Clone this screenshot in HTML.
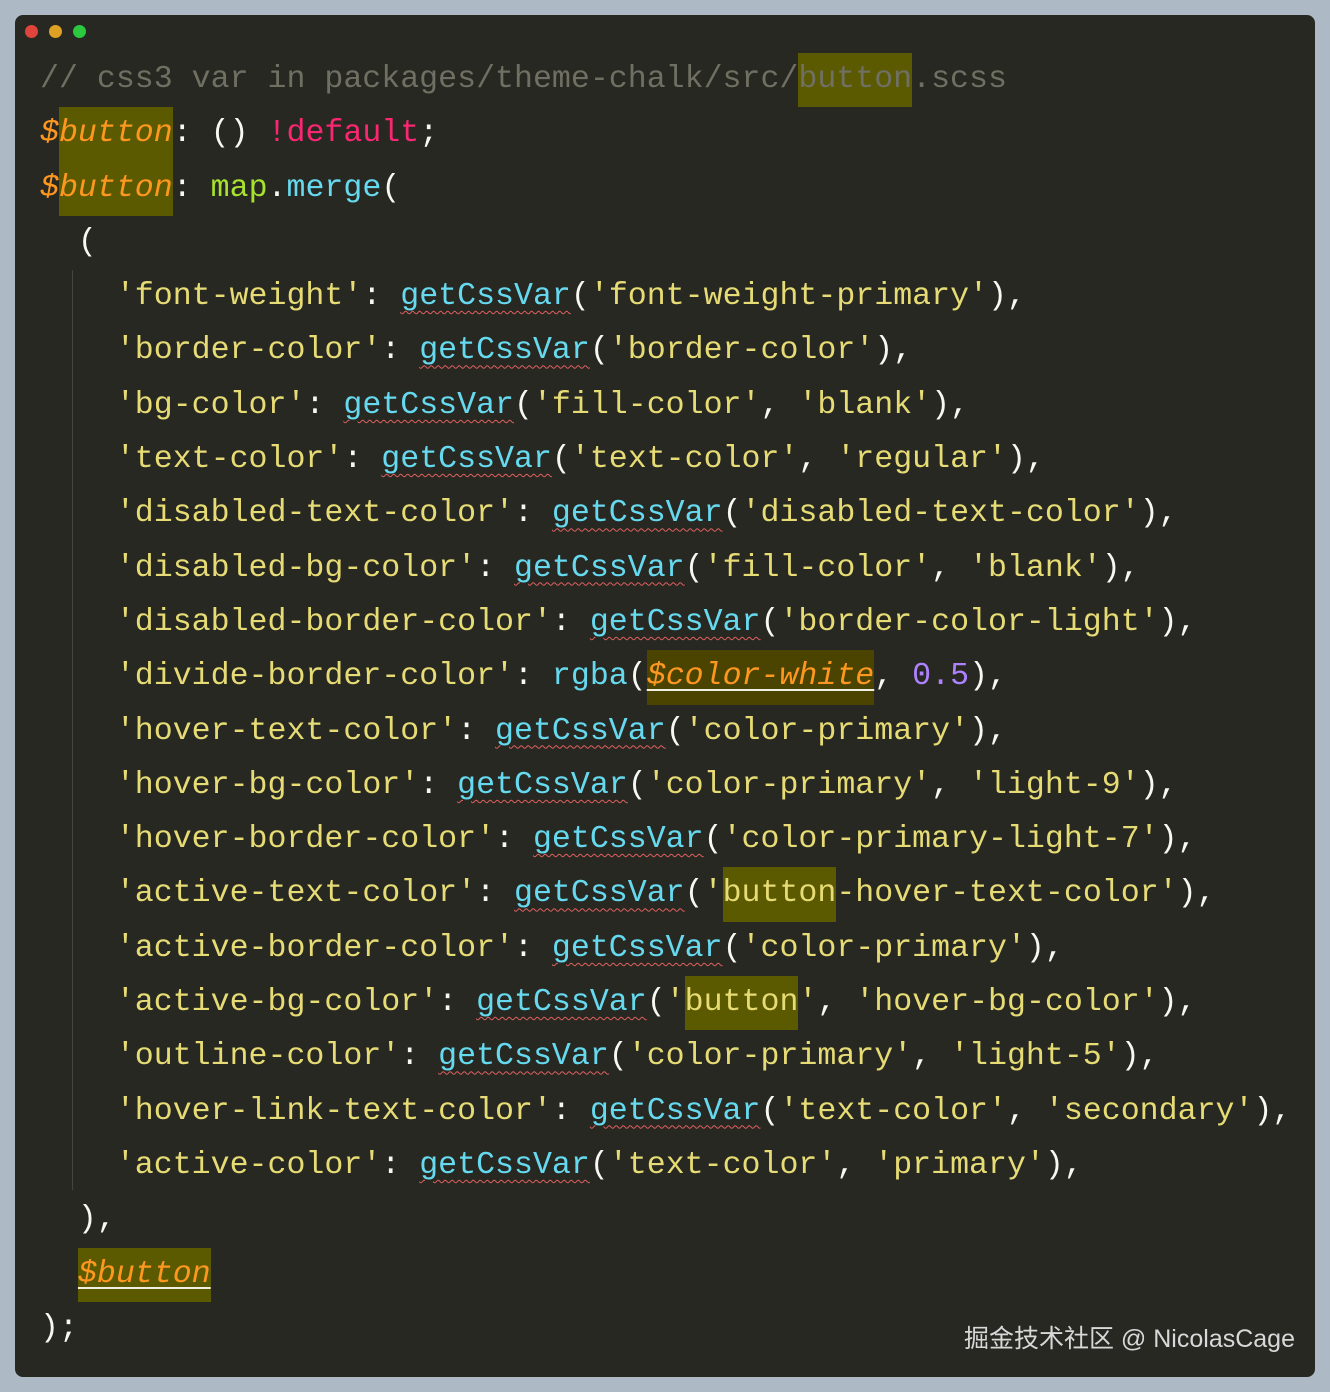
<!DOCTYPE html>
<html><head><meta charset="utf-8"><style>
html,body{margin:0;padding:0;width:1330px;height:1392px;background:#adb9c4;overflow:hidden}
.win{position:absolute;left:15px;top:15px;width:1300px;height:1362px;background:#272822;border-radius:8px}
.dot{position:absolute;top:10px;width:13px;height:13px;border-radius:50%}
pre{position:absolute;left:40px;top:53px;margin:0;font-family:"Liberation Mono",monospace;font-size:31.6px;line-height:54.3px;color:#f8f8f2;white-space:pre}
.c{color:#6f6f62}.o{color:#fd971f;font-style:italic}.p{color:#f92672}.g{color:#a6e22e}.b{color:#66d9ef}.y{color:#e6db74}.n{color:#ae81ff}
.w{text-decoration:underline wavy #e06060;text-decoration-thickness:1px;text-underline-offset:6px}
.h{background:#5b5a00;display:inline-block;line-height:54.3px}
.h2{background:#4a4400;text-decoration:underline #f0f0e0 2px;text-underline-offset:5px}
.guide{position:absolute;left:72px;top:270px;width:1px;height:920px;background:#444}
.wm{position:absolute;right:20px;bottom:22px;font-family:"Liberation Sans","Noto Sans CJK SC",sans-serif;font-size:25px;color:#d8d8d8}
</style></head><body>
<div class="win">
<div class="dot" style="left:10px;background:#e0443a"></div>
<div class="dot" style="left:34px;background:#dea123"></div>
<div class="dot" style="left:58px;background:#2bc840"></div>
<div class="wm">掘金技术社区 @ NicolasCage</div>
</div>
<div class="guide"></div>
<pre><span class="c">// css3 var in packages/theme-chalk/src/<span class="h">button</span>.scss</span>
<span class="o">$<span class="h">button</span></span>: () <span class="p">!default</span>;
<span class="o">$<span class="h">button</span></span>: <span class="g">map</span>.<span class="b">merge</span>(
  (
    <span class="y">'font-weight'</span>: <span class="b w">getCssVar</span>(<span class="y">'font-weight-primary'</span>),
    <span class="y">'border-color'</span>: <span class="b w">getCssVar</span>(<span class="y">'border-color'</span>),
    <span class="y">'bg-color'</span>: <span class="b w">getCssVar</span>(<span class="y">'fill-color'</span>, <span class="y">'blank'</span>),
    <span class="y">'text-color'</span>: <span class="b w">getCssVar</span>(<span class="y">'text-color'</span>, <span class="y">'regular'</span>),
    <span class="y">'disabled-text-color'</span>: <span class="b w">getCssVar</span>(<span class="y">'disabled-text-color'</span>),
    <span class="y">'disabled-bg-color'</span>: <span class="b w">getCssVar</span>(<span class="y">'fill-color'</span>, <span class="y">'blank'</span>),
    <span class="y">'disabled-border-color'</span>: <span class="b w">getCssVar</span>(<span class="y">'border-color-light'</span>),
    <span class="y">'divide-border-color'</span>: <span class="b">rgba</span>(<span class="o h2" style="display:inline-block;line-height:54.3px">$color-white</span>, <span class="n">0.5</span>),
    <span class="y">'hover-text-color'</span>: <span class="b w">getCssVar</span>(<span class="y">'color-primary'</span>),
    <span class="y">'hover-bg-color'</span>: <span class="b w">getCssVar</span>(<span class="y">'color-primary'</span>, <span class="y">'light-9'</span>),
    <span class="y">'hover-border-color'</span>: <span class="b w">getCssVar</span>(<span class="y">'color-primary-light-7'</span>),
    <span class="y">'active-text-color'</span>: <span class="b w">getCssVar</span>(<span class="y">'<span class="h">button</span>-hover-text-color'</span>),
    <span class="y">'active-border-color'</span>: <span class="b w">getCssVar</span>(<span class="y">'color-primary'</span>),
    <span class="y">'active-bg-color'</span>: <span class="b w">getCssVar</span>(<span class="y">'<span class="h">button</span>'</span>, <span class="y">'hover-bg-color'</span>),
    <span class="y">'outline-color'</span>: <span class="b w">getCssVar</span>(<span class="y">'color-primary'</span>, <span class="y">'light-5'</span>),
    <span class="y">'hover-link-text-color'</span>: <span class="b w">getCssVar</span>(<span class="y">'text-color'</span>, <span class="y">'secondary'</span>),
    <span class="y">'active-color'</span>: <span class="b w">getCssVar</span>(<span class="y">'text-color'</span>, <span class="y">'primary'</span>),
  ),
  <span class="o h2" style="background:#5b5a00;display:inline-block;line-height:54.3px">$button</span>
);</pre>
</body></html>
